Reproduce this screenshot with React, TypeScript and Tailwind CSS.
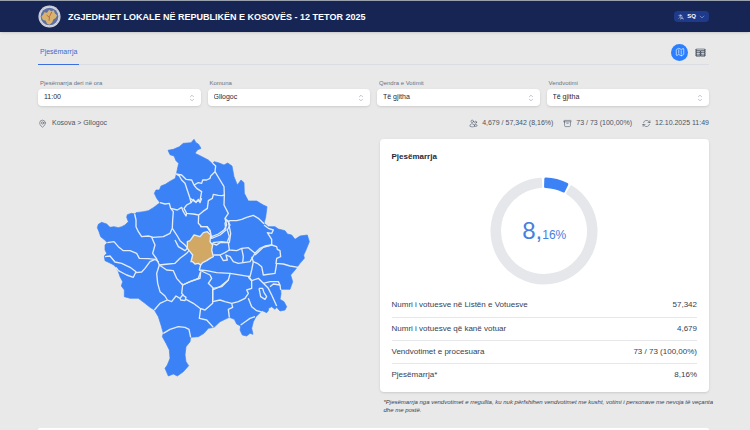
import React from 'react';
import {
  HiOutlineArchiveBox,
  HiOutlineArrowPath,
  HiOutlineLanguage,
  HiOutlineMap,
  HiOutlineMapPin,
  HiOutlineUsers,
  HiOutlineChevronDown,
  HiOutlineChevronUpDown,
  HiOutlineTableCells,
} from 'react-icons/hi2';

const filters = [
  { id: 'time', label: 'Pjesëmarrja deri në ora', value: '11:00' },
  { id: 'municipality', label: 'Komuna', value: 'Gllogoc' },
  { id: 'center', label: 'Qendra e Votimit', value: 'Të gjitha' },
  { id: 'station', label: 'Vendvotimi', value: 'Të gjitha' },
];

const summary = [
  { text: '4,679 / 57,342 (8,16%)', Icon: HiOutlineUsers },
  { text: '73 / 73 (100,00%)', Icon: HiOutlineArchiveBox },
  { text: '12.10.2025 11:49', Icon: HiOutlineArrowPath },
];

const rows = [
  { label: 'Numri i votuesve në Listën e Votuesve', value: '57,342' },
  { label: 'Numri i votuesve që kanë votuar', value: '4,679' },
  { label: 'Vendvotimet e procesuara', value: '73 / 73 (100,00%)' },
  { label: 'Pjesëmarrja*', value: '8,16%' },
];

// Country outline
const OUTLINE =
  '234,61 240,74 252,78 258,92 266,100 262,118 260,128 256,145 238,155 226,163 213,168 208,180 198,180 193,190 200,205 210,218 190,233 175,242 160,245 138,248 134,252 124,250 112,254 110,262 115,275 105,285 95,290 85,293 72,290 60,292 50,282 35,277 25,283 22,293 27,305 32,320 44,330 52,338 45,345 45,360 50,370 43,378 45,392 58,398 70,404 78,412 85,425 90,440 98,455 94,468 103,480 103,500 120,505 145,505 165,520 180,532 193,540 205,560 213,585 220,610 217,620 228,640 238,660 240,685 232,705 225,715 235,738 250,732 262,738 280,725 296,707 288,695 285,675 288,650 300,635 302,622 325,620 342,610 355,595 372,592 390,575 405,568 418,562 433,568 440,582 452,588 450,600 457,615 470,618 480,610 489,613 485,595 490,575 498,560 510,548 517,542 530,548 535,542 536,535 545,530 555,538 560,532 570,543 585,540 590,530 582,515 570,508 573,492 572,478 600,478 608,455 602,435 615,420 630,400 643,385 641,375 648,360 658,335 652,315 630,318 615,328 605,315 592,312 585,302 565,297 555,290 535,290 522,280 527,262 531,230 520,225 500,213 475,213 463,190 462,158 453,150 442,165 432,140 426,108 413,99 402,105 385,98 372,95 368,102 355,90 330,77 315,70 322,60 333,55 325,42 318,38 312,28 303,38 280,40 268,50 250,58';

// Municipality borders, outer areas
const BORDERS = [
  '258,132 275,135 288,148 305,150 312,165 320,175 335,185 330,212 315,215 300,205 290,175 285,160 275,150 268,138 258,132',
  '312,165 325,158 335,160 338,150 350,150 360,145 362,138 375,125 377,108 368,100',
  '375,125 390,150 402,170 403,195 396,197 385,196 370,193 367,205 355,212 352,235 338,245 326,255 325,280 335,290 352,290 360,305',
  '326,255 310,252 290,250 282,235 290,225 303,218 300,205',
  '303,218 310,208 318,218 325,208 330,218 335,205',
  '210,218 225,222 238,220 242,235 250,245 248,270 247,295 240,310 220,320 190,322 175,318 155,320 145,305 138,290 138,270 134,252',
  '242,235 262,240 275,232 280,245 288,258 290,250',
  '247,295 262,318 270,332 285,345 298,360',
  '185,322 195,345 188,370 200,387 208,405 235,402 255,400 270,385 290,370 300,358',
  '52,338 72,335 85,350 100,362 120,362 140,370 148,385 175,386 195,388 206,396',
  '45,380 60,378 75,396 95,400 120,412 138,425 130,442 110,435 85,422 78,412',
  '138,428 155,426 165,415 180,395 195,388',
  '208,405 230,420 250,422 260,445 278,465 275,490 280,495',
  '208,405 200,430 203,460 210,485 225,498 232,510 210,520 193,540',
  '232,510 245,515 258,498 270,505 278,495 288,502 285,512 272,510 270,503',
  '288,508 310,520 330,535 345,540 368,520 368,480 390,470 415,450',
  '332,535 328,565 350,570 370,592',
  '220,610 240,598 265,590 285,592 297,598 302,622',
  '278,465 300,455 325,445 332,425',
  '368,515 390,510 405,515 425,520 445,515 465,505 475,490 470,480 485,475 485,452 475,442',
  '425,520 428,532 415,538 418,562',
  '475,505 485,530 500,542 515,546',
  '452,585 470,572 480,565 495,560',
  '485,452 505,445 520,460 535,475 545,495 560,528',
  '520,460 540,455 565,455 570,465 550,462 540,470',
  '570,465 572,480',
  '507,475 518,475 522,488 530,500 525,508 512,500 507,475',
  '403,195 402,225 415,250 405,265 415,275 420,272 440,272 455,268 470,262 490,256 505,265 522,281',
  '405,265 410,285 402,300 385,312 365,320',
  '415,275 418,290 422,310 418,338 395,335 368,338',
  '522,285 535,295 550,300 545,310 532,308 545,328 545,345 520,352 495,375',
  '545,345 560,350 562,358 570,362 572,380 560,385 558,400 580,402 600,408 625,412',
  '330,290 350,290 360,300',
];

// Borders around the selected municipality
const CENTER_BORDERS = [
  '120,30 123,45 125,55 150,45 168,30 165,10 170,0',
  '125,70 140,75 150,68 175,68 178,90 200,92 215,85 235,83 255,100 270,85 285,78 305,75',
  '172,0 180,15 172,30 178,50 172,65',
  '130,105 150,105 165,98 178,90',
  '150,105 160,122 172,120 168,105 180,110 190,125 205,130 240,125 255,100',
  '215,85 220,110 218,128',
  '92,135 88,150 110,152 140,158 180,160 240,170 245,150 250,125 262,130 275,140 280,165 315,160 320,130',
  '245,110 250,125',
  '235,168 245,182',
  '88,150 120,165 125,175 115,190 130,205 155,200 175,180 180,162',
  '15,60 25,80 45,92 52,85',
  '35,190 38,195 60,185 90,175 92,155',
  '128,205 128,240',
];

const SELECTED =
  '52,65 60,62 65,55 72,45 80,47 90,50 100,38 112,35 122,45 120,65 128,75 125,90 130,110 120,115 110,122 98,128 92,135 85,130 75,132 68,125 63,125 68,105 60,95 52,85';

const KosovoMap: React.FC = () => (
  <svg viewBox="0 27 690 723" className="h-auto w-[230px]" role="img" aria-label="Kosova">
    <polygon points={OUTLINE} fill="#3b82f6" stroke="#3b82f6" strokeWidth="2" strokeLinejoin="round" />
    <g fill="none" stroke="#e3ecf9" strokeWidth="4" strokeLinejoin="round">
      {BORDERS.map((points, i) => (
        <polyline key={i} points={points} />
      ))}
      <g transform="translate(240 270)">
        {CENTER_BORDERS.map((points, i) => (
          <polyline key={i} points={points} />
        ))}
        <polygon points={SELECTED} fill="#d1a965" />
      </g>
    </g>
  </svg>
);

const ringPath = (from: number, to: number, outer: number, inner: number) => {
  const at = (deg: number, r: number) => {
    const a = (deg * Math.PI) / 180;
    return `${54 + r * Math.sin(a)} ${54 - r * Math.cos(a)}`;
  };
  const large = to - from > 180 ? 1 : 0;
  return `M${at(from, outer)} A${outer} ${outer} 0 ${large} 1 ${at(to, outer)} L${at(to, inner)} A${inner} ${inner} 0 ${large} 0 ${at(from, inner)} Z`;
};

const Donut: React.FC = () => (
  <div className="relative flex items-center justify-center">
    <svg viewBox="0 0 108 108" className="size-[108px]" strokeWidth="3" strokeLinejoin="round" aria-hidden="true">
      <path d={ringPath(32, 356, 52, 44.5)} fill="#e5e7eb" stroke="#e5e7eb" />
      <path d={ringPath(2, 26, 52, 44.5)} fill="#3b82f6" stroke="#3b82f6" />
    </svg>
    <p className="absolute text-2xl leading-none text-[#4680df]">
      8,<span className="text-xs">16%</span>
    </p>
  </div>
);

const Emblem: React.FC = () => (
  <svg viewBox="0 0 48 48" className="size-[23px]" aria-hidden="true">
    <circle cx="24" cy="24" r="23" fill="#d5d8df" />
    <circle cx="24" cy="24" r="21" fill="none" stroke="#a6adbc" strokeWidth="1.5" strokeDasharray="2 2" />
    <circle cx="24" cy="24" r="18.5" fill="#5d6fa5" />
    <path d="M13 15l6 1 4-6 5 3 5-2 2 6 5 5-3 5-5 3-2 6-6 5-5-2-3-6-6-2-3-7 4-4z" fill="#d9b36b" />
    <path d="M29 14l-5 10-1 9M18 21l6 5" fill="none" stroke="#b5694a" strokeWidth="2" />
  </svg>
);

export default function App() {
  return (
    <div className="flex min-h-screen flex-col bg-[#e9e9e9] font-['Liberation_Sans',Arial,sans-serif] text-gray-700">
      <header className="flex h-8 items-center justify-between border-t border-gray-400 bg-[#172554] pr-[41px] pl-[38px] shadow-sm">
        <div className="flex items-center gap-[7px]">
          <Emblem />
          <h1 className="text-[9px] leading-3 font-bold text-white">
            ZGJEDHJET LOKALE NË REPUBLIKËN E KOSOVËS - 12 TETOR 2025
          </h1>
        </div>
        <button className="flex h-[11px] items-center gap-[3px] rounded-sm bg-[#1e3a8a] px-1 text-[6px] font-bold text-white">
          <HiOutlineLanguage size={6} />
          SQ
          <HiOutlineChevronDown size={6} />
        </button>
      </header>

      <main className="flex flex-1 flex-col pr-[41px] pl-[38px]">
        <nav className="mt-2 flex h-[25px] items-stretch justify-between border-b border-gray-300/60">
          <a href="#pjesemarrja" className="-mb-px flex items-center border-b border-[#3b6fe0] px-0.5 text-[7px] text-[#3f68cf]">
            Pjesëmarrja
          </a>
          <div className="flex items-center gap-1">
            <button aria-label="Harta" className="flex size-[17px] items-center justify-center rounded-full bg-blue-500 text-white">
              <HiOutlineMap size={10} />
            </button>
            <button aria-label="Tabela" className="flex size-[17px] items-center justify-center rounded-full text-gray-600">
              <HiOutlineTableCells size={11} />
            </button>
          </div>
        </nav>

        <div className="mt-3 grid grid-cols-4 gap-[7px]">
          {filters.map((f) => (
            <div key={f.id} className="flex flex-col">
              <label htmlFor={f.id} className="px-0.5 text-[6px] leading-3 text-gray-500">
                {f.label}
              </label>
              <div className="relative flex items-center">
                <select
                  id={f.id}
                  defaultValue={f.value}
                  className="h-[17px] w-full appearance-none rounded-sm bg-white px-1.5 text-[7px] text-gray-800 shadow-sm"
                >
                  <option>{f.value}</option>
                </select>
                <HiOutlineChevronUpDown size={10} className="pointer-events-none absolute right-1 text-gray-400" />
              </div>
            </div>
          ))}
        </div>

        <div className="mt-3 flex items-center justify-between text-[7px] leading-[10px] text-gray-600">
          <div className="flex items-center gap-[5px]">
            <HiOutlineMapPin size={9} />
            <span>Kosova &gt; Gllogoc</span>
          </div>
          <div className="flex items-center gap-2.5">
            {summary.map(({ text, Icon }) => (
              <div key={text} className="flex items-center gap-1">
                <Icon size={9} />
                <span>{text}</span>
              </div>
            ))}
          </div>
        </div>

        <div className="mt-[11px] grid grid-cols-2 gap-3">
          <div className="flex items-start justify-center pl-1">
            <KosovoMap />
          </div>
          <div>
            <section className="flex flex-col rounded-sm bg-white px-3 pt-3 pb-1.5 shadow-sm">
              <h2 className="text-[8px] leading-3 font-bold text-gray-800">Pjesëmarrja</h2>
              <div className="mt-3.5 mb-[9px] flex justify-center">
                <Donut />
              </div>
              <table className="w-full text-[8px] leading-3">
                <tbody>
                  {rows.map((r) => (
                    <tr key={r.label} className="h-[23px] border-b border-gray-200 last:border-0">
                      <th scope="row" className="text-left font-normal">{r.label}</th>
                      <td className="text-right">{r.value}</td>
                    </tr>
                  ))}
                </tbody>
              </table>
            </section>
            <p className="-mr-2 mt-1.5 pl-1 text-[6px] leading-[8px] text-gray-700 italic">
              *Pjesëmarrja nga vendvotimet e rregullta, ku nuk përfshihen vendvotimet me kusht, votimi i personave me nevoja të veçanta dhe me postë.
            </p>
          </div>
        </div>

        <section className="mt-3.5 flex-1 rounded-t-sm bg-white" />
      </main>
    </div>
  );
}
